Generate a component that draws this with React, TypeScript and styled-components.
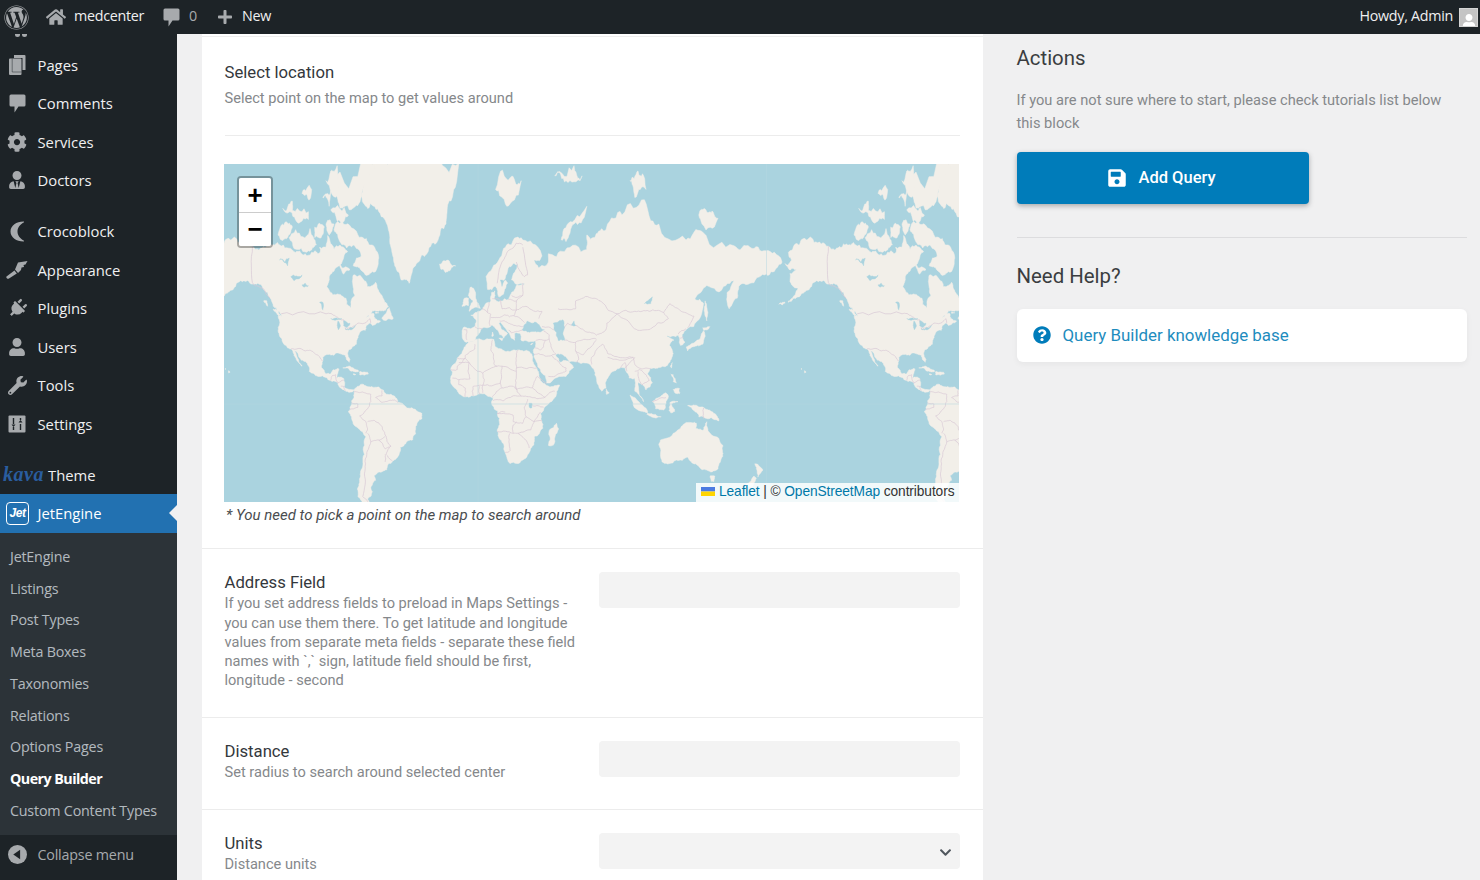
import React from "react";
import styled, { createGlobalStyle } from "styled-components";
import {
  FaWordpress,
  FaHome,
  FaPlus,
  FaCog,
  FaUserTie,
  FaPlug,
  FaUser,
  FaWrench,
  FaSave,
  FaQuestionCircle,
  FaChevronDown,
} from "react-icons/fa";

type Pt = [number, number];

// lon/lat outlines, projected onto the same web mercator the tiles use
const WORLD = 576;
const LON0_X = 254;
const EQUATOR_Y = 240;
const px = (lon: number) => LON0_X + (lon / 360) * WORLD;
const py = (lat: number) =>
  EQUATOR_Y - (WORLD / (2 * Math.PI)) * Math.log(Math.tan(Math.PI / 4 + (lat * Math.PI) / 360));

// coarse outlines look like polygons, so break the long edges up a bit
let seed = 7;
const rnd = () => {
  seed = (seed * 16807) % 2147483647;
  return seed / 2147483647 - 0.5;
};
const roughen = (pts: Pt[], close: boolean, amount: number, levels = 3): Pt[] => {
  let out = pts;
  for (let l = 0; l < levels; l++) {
    const next: Pt[] = [];
    const n = close ? out.length : out.length - 1;
    for (let i = 0; i < n; i++) {
      const a = out[i];
      const b = out[(i + 1) % out.length];
      const dx = b[0] - a[0];
      const dy = b[1] - a[1];
      next.push(a);
      if (Math.hypot(dx, dy) > 0.7) {
        const k = rnd() * amount;
        next.push([(a[0] + b[0]) / 2 - dy * k, (a[1] + b[1]) / 2 + dx * k]);
      }
    }
    if (!close) next.push(out[out.length - 1]);
    out = next;
  }
  return out;
};
const toPath = (pts: Pt[], close = true, amount = 0.32) =>
  roughen(pts, close, amount)
    .map((p, i) => `${i ? "L" : "M"}${px(p[0]).toFixed(1)} ${py(p[1]).toFixed(1)}`)
    .join("") + (close ? "Z" : "");

const land: Pt[][] = [
  // north america
  [[-168,65.6],[-164,66.5],[-166,68.3],[-161,70.3],[-156.5,71.3],[-150,70.5],[-141,69.7],[-135,69.3],[-128,70],[-124,70],[-115,68.5],[-108,68],[-100,68],[-95,69.5],[-94,71.9],[-90,69],[-85,69.5],[-81.5,68.5],[-85,66],[-87,65],[-93,62],[-94.5,59],[-92.5,57],[-88,56.5],[-82.5,55],[-82,52.5],[-79.5,51.3],[-79,54.5],[-77,56],[-78,58.7],[-78,62.4],[-73,62],[-70,60.5],[-69,58.8],[-65.5,59.5],[-64,60.3],[-61,56.5],[-57,53],[-56,51.8],[-60,50.2],[-66,50.2],[-70,47.5],[-65,49],[-64.5,47],[-61,46],[-64,44.5],[-66,44],[-67,45],[-70,43.5],[-70.5,41.7],[-74,40.6],[-75.5,37.5],[-76,35],[-78,33.9],[-81,32],[-81.5,30],[-80,26.8],[-80.5,25.2],[-82,26.5],[-83,29],[-85,29.7],[-89,30.2],[-90,29.1],[-94,29.6],[-97,28],[-97.5,25],[-97.8,22.3],[-95.5,18.8],[-92,18.6],[-90.7,20.8],[-87,21.5],[-88,18],[-88.5,16],[-84,15.8],[-83.3,13],[-83.7,10.5],[-80,9],[-77.5,8.7],[-78.5,7.5],[-80.5,7.3],[-83,8.3],[-85.7,10],[-87.5,13],[-91,14],[-94.5,16.2],[-100,17],[-105.5,20],[-105.5,22.5],[-109,26],[-112.5,30],[-114.7,31.7],[-113,28],[-110,23],[-112,25],[-115,29],[-117,32.5],[-120.5,34.5],[-122.5,37.5],[-124.3,40.3],[-124,46],[-124.7,48.4],[-122.5,48],[-125,50],[-128,52],[-130,55],[-134,58],[-139,59.8],[-146,60.7],[-151,60],[-153,58],[-158,56.5],[-164,54.8],[-160,58.5],[-165,60.5],[-165,63],[-161,64]],
  // greenland
  [[-73,78.3],[-66,81],[-55,82.3],[-40,83.4],[-28,83.2],[-12,81.7],[-19,77],[-20,74],[-25,71],[-32,68],[-38,65.8],[-42,62],[-43,60],[-48,61],[-52,65],[-54,69],[-56,73],[-62,76],[-69,76.5]],
  // canadian arctic
  [[-125,72],[-120,74.4],[-116,73.5],[-119,71.5]],
  [[-118,71.5],[-114,73],[-105,73.2],[-101,70],[-106,68.7],[-115,69.2]],
  [[-117,76],[-106,76],[-106,74.8],[-114,74.7]],
  [[-102,73.5],[-96,73.5],[-98,71.5],[-102,71.5]],
  [[-95,74],[-90,74],[-93,72]],
  [[-92,76.3],[-81,75.5],[-88,74.5]],
  [[-88,78],[-92,81],[-70,83],[-62,82.3],[-72,79],[-76,77],[-85,76.5]],
  [[-95,80],[-88,81.5],[-87,79]],
  [[-122,76.5],[-116,77.5],[-116,76]],
  [[-110,78.5],[-104,79],[-105,77.8]],
  [[-97,78],[-92,78.8],[-93,76.8]],
  [[-90,73],[-80,73.7],[-72,71.5],[-68,70],[-62,67],[-64,63.5],[-68,62.6],[-74,64.5],[-78,65],[-73,67.5],[-78,70],[-86,70.5]],
  [[-87,65.5],[-80,64],[-84,62.8]],
  [[-99,69.5],[-96,69],[-98,68.5]],
  [[-60,47],[-55,46.8],[-53,47],[-55.5,51.5],[-59,48]],
  [[-128,50.8],[-125,50],[-123.5,48.4],[-125.5,48.8]],
  [[-64,49.8],[-62,49.4],[-64,49.2]],
  [[-134,54],[-132,54],[-131.5,52]],
  // aleutians, hawaii
  [[-166,54],[-163,54.8],[-166,53.5]],
  [[-172,52.8],[-168,53.3],[-170,52.5]],
  [[-156,20.3],[-155,19.5],[-155.8,19]],
  [[-158,21.6],[-157.5,21.3],[-158,21.2]],
  // caribbean
  [[-84.5,22],[-80,23],[-75,20.8],[-74.5,20],[-78,20],[-82,22]],
  [[-74,19.8],[-69,19.5],[-68.5,18.4],[-74,18]],
  [[-78,18.5],[-76.3,18.1],[-77.5,17.8]],
  // south america
  [[-77.5,8.7],[-75,11],[-72,12.2],[-68,10.7],[-62,10.6],[-57,6],[-52,4.8],[-50,1],[-44.5,-2.5],[-39,-3.5],[-35,-6],[-35,-9],[-39,-14],[-39,-18],[-41,-22],[-45,-23.7],[-48.5,-26],[-49,-29],[-53,-33.5],[-56,-35],[-57,-38],[-62,-39],[-65,-41],[-64,-43],[-67,-46],[-66,-48],[-69,-51],[-68,-53],[-72,-53.5],[-75,-50],[-74,-44],[-73,-38],[-71,-30],[-70,-20],[-75,-15],[-79,-8],[-81,-5],[-80,-2],[-79,2],[-77.5,4],[-77.5,7]],
  // africa
  [[-6,35.8],[3,37],[10,37.3],[11,33.5],[15,32.3],[20,31],[25,32],[32,31.2],[34.2,28],[37,21],[39,15.5],[43,11.5],[51,11.8],[49,6],[42,-1.5],[39,-6],[40.5,-15],[35,-20],[35,-24.5],[32.8,-27],[28,-33],[20,-34.8],[18.2,-32],[14.5,-22],[12,-16],[13.5,-9],[9,-1],[9.5,4],[5,5.8],[-4,5.2],[-8,4.5],[-13,8.5],[-17,14.7],[-16,19],[-17,21],[-13,27.5],[-10,30]],
  // eurasia
  [[-9,37],[-9.3,43],[-2,43.5],[-1,46],[-4.5,48.4],[1,50],[4,52],[8,54],[8.5,57],[10.5,57.5],[10,54.5],[14,54],[19,54.5],[21,57],[24,59.3],[30,60],[23,60],[21,61],[25,65.5],[22,65.7],[17,61.5],[18.5,60],[16,56.5],[13,55.5],[11,59],[6,58],[5,62],[13,66.5],[20,70],[28,71],[40,67.5],[35,66.5],[38,64.5],[44,66],[44,68],[54,68.5],[68,69],[68,72],[73,71.5],[75,72.5],[80,73],[90,75.5],[104,77.7],[113,74],[130,71],[140,72.7],[160,69.8],[170,69.5],[180,68.7],[190,66],[187,64.6],[179,62.5],[170,60],[163,59],[162,55],[157,51],[155.7,57],[160,61],[155,59.3],[143,59.3],[135.5,54.7],[141,53],[138,46.5],[130.7,42.5],[127.5,39.8],[129.4,36],[126.5,34.4],[125,39.5],[121.5,39],[118,39],[122.5,37],[119.5,34.5],[122,30],[119.5,25],[113.5,22.3],[108,21.7],[106,19],[109,13],[105,8.8],[100,13.5],[103.5,1.5],[100.5,6],[98,8],[98,16],[94.5,16],[92,22],[87,21.5],[80.3,15],[80,10],[77.5,8],[73,18],[72.5,21],[67,24.8],[57,25.5],[56,27],[50,30],[48.5,29.5],[51,25],[56.3,26],[59.8,22.5],[55,17],[45,13],[43,13],[39,21],[35,28.3],[34.5,31.5],[36,36.5],[31,36.5],[27,37],[26.5,40],[23,40.5],[23,37],[20,39.5],[14,45.5],[13,45],[18.5,40.3],[16,38],[12,42],[8.5,44.2],[3,43],[0,39.5],[-2,37],[-5.5,36]],
  // islands
  [[-5.5,50],[1.5,51.2],[-1.5,55],[-2,57.5],[-5,58.6],[-6,56],[-3,54],[-5,52]],
  [[-10,52],[-6,52.2],[-6,55],[-8.5,55]],
  [[-24,65.5],[-18,66.3],[-14,65],[-19,63.4],[-23,64]],
  [[11,79],[20,80.3],[27,80],[18,76.8]],
  [[48,80.5],[60,81.5],[65,80.5],[55,80]],
  [[95,80],[100,81],[105,79],[98,78]],
  [[138,75.5],[145,76],[150,75],[140,74]],
  [[52,71],[56,74],[68,76.8],[60,74],[55,70.7]],
  [[142,54],[143.5,50],[143,46],[142,48]],
  [[141,41.5],[142,39],[140.5,35],[136,34],[131,31.5],[130,33.5],[135,35.6],[139,38]],
  [[140.5,43],[145,43.5],[143,42],[141,41.8]],
  [[120.3,23],[121.5,25],[121,22]],
  [[120.5,18.5],[122,18],[124,13],[122,14]],
  [[122,9],[126,9.5],[126,6.5],[123,7]],
  [[95,5.5],[98,4],[104,-2],[106,-6],[102,-4.5]],
  [[105.5,-6.5],[111,-6.5],[114.5,-8],[108,-7.8]],
  [[109,1.5],[114,4.5],[117,7],[119,5],[117.5,1],[116,-3.8],[111,-3]],
  [[120,1],[125,1.5],[121,0],[123,-4.5],[120.5,-5.5],[119.5,-2]],
  [[131,-1],[138,-1.8],[144,-3.8],[147.5,-6],[150.5,-10.5],[146,-8.5],[143,-9],[138,-8],[135,-4]],
  [[114,-22],[113.5,-26],[115,-34],[119,-35],[124,-33],[131,-31.5],[136,-35],[140,-38],[146,-39],[150,-37.5],[153,-31],[153,-25],[146,-19],[143,-11],[141,-16],[136,-15],[136.5,-12],[131,-11.5],[127,-14],[122,-18]],
  [[145,-41],[148,-41],[147.5,-43.5],[146,-43.5]],
  [[173,-35],[178,-38],[175,-41.5],[174.5,-39]],
  [[172.5,-41],[174,-42],[171,-46],[167,-46]],
  [[44,-25],[47,-25],[50.3,-15.5],[49,-12],[44.5,-16.5]],
  [[80,9.5],[82,7],[80.5,6]],
  [[33,35],[34.5,35.5],[33,34.6]],
  [[9,41],[9.5,39],[8.5,39]],
  [[13,38],[15.5,38],[15,36.7]],
];

const water: Pt[][] = [
  [[27.7,42],[31,46],[37,45],[41.5,42],[36,41.3],[31,41]],
  [[47,45],[53,46.5],[53,40],[54,37],[50,37],[49,41]],
  [[60,46],[61,44],[58.5,44]],
  [[-92,47],[-87,47],[-85,47],[-88,46.5]],
  [[-87.5,46],[-86,44],[-87.3,42],[-88,44]],
  [[-84,46],[-80,45],[-82,43],[-84,44]],
  [[-83,42.5],[-79,43],[-76.5,44],[-79,42]],
  [[-124,66.5],[-118,67],[-119,65]],
  [[-117,62],[-110,62.5],[-115,60.8]],
  [[-99,53.5],[-97,53.5],[-97,50.5]],
  [[-110,59.5],[-106,59.2],[-109,58.8]],
  [[32,0.5],[34,0],[33.5,-2.5],[32,-2]],
  [[104,53],[109,55.5],[108,53]],
  [[14,61],[18,61.5],[15,59]],
];

const borders: Pt[][] = [
  [[-141,69.7],[-141,60.2],[-137,59],[-130,55]],
  [[-123,49],[-95,49],[-89,48],[-84,46.5],[-82.5,42],[-79,43],[-75,45],[-71,45],[-67.5,47],[-67,45]],
  [[-117,32.5],[-108,31.5],[-106,31.7],[-101,29.5],[-97.3,26]],
  [[-92,14.6],[-91,17.5],[-89,18],[-88.8,15.8],[-87.5,13],[-83.5,15]],
  [[-85.7,11],[-83.7,11],[-83,8.3]],
  [[-77.5,7.5],[-72,7.5],[-67,6],[-67,1.5],[-70,-4],[-74,-7.5],[-70,-11],[-69,-15.5],[-70,-18]],
  [[-79,0.8],[-75,0],[-75,-2],[-80.3,-3.5]],
  [[-60,8.5],[-60,5],[-64,4],[-60,1],[-56,2],[-52,2.5],[-50,1]],
  [[-69,-11],[-65,-10],[-60,-14],[-58,-19],[-54.5,-25.5],[-57.5,-30],[-53.5,-33.5]],
  [[-69,-18],[-67,-23],[-62,-22],[-58,-20]],
  [[-62,-22],[-58,-27],[-54.5,-25.5]],
  [[-67,-23],[-69.5,-30],[-71,-40],[-72,-50],[-69,-52]],
  [[-58,-34],[-58,-30]],
  [[-9,42],[-7,42],[-7,37.2]],
  [[-2,43.5],[3,42.5]],
  [[2.5,51],[6,49.5],[8,48.8],[7,45],[7.5,43.8]],
  [[7,53.5],[6,50.8],[6,49.5]],
  [[9,54.8],[14.2,54],[15,51],[24,50.5],[24,54],[19,54.5]],
  [[8,47.5],[13,47.5],[17,48.5],[22.5,48.2],[24,50.5]],
  [[13.5,46],[16.5,46],[19,45],[22.5,44],[28.5,43.7]],
  [[22.5,48.2],[29,45.3]],
  [[19,42],[21,40.5],[26,41.5],[28,42]],
  [[24,54],[28,56],[28,60]],
  [[21,56],[28,56]],
  [[24,50.5],[30,52],[40,50],[38,47]],
  [[12,60],[15,66],[20,69],[28,70]],
  [[24,66],[29,62],[31,62.5],[28,69.5]],
  [[40,43.5],[48,42]],
  [[36,36.7],[42,37],[44.5,37.5],[44.5,39.5],[41,41.5]],
  [[35.5,33],[39,32],[41,34],[42,37]],
  [[35,29.5],[38,30],[46,29],[48.5,29.8]],
  [[46,29],[51,24.5],[55,22],[55,20],[52,19],[44,17]],
  [[44.5,37.5],[46,33],[48.5,30]],
  [[61,36],[61,31.5],[63,27],[61.7,25]],
  [[54,37],[61,36],[66,37.4],[74,37.5]],
  [[61,31.5],[66,29.5],[70,33],[74,37]],
  [[71,24],[71,28],[74,32],[78,35]],
  [[50,51],[61,51],[61,54],[71,55],[77,53.8],[87,49]],
  [[53,42],[56,45],[61,44],[68,41],[74,39.5],[80,42],[80.5,45],[87,49]],
  [[87,49],[98,50],[107,50],[116,49.5],[120,53],[127,50],[135,48],[131,43]],
  [[87,49],[97,43],[105,42],[112,45],[119,47],[116,49.5]],
  [[78,35],[81,30],[88,28],[97,28],[98,24],[102,21.5],[108,21.7]],
  [[81,28],[88,26.5],[92,26.5],[97,28]],
  [[89,22],[92,25],[93,20]],
  [[92,22],[94,24],[98,28]],
  [[98,20],[101,21],[105,18],[107,14.5],[102.5,12],[100,20]],
  [[125,40],[130,42.5]],
  [[126,38],[128.5,38.5]],
  [[141,-2.5],[141,-9]],
  [[109,1.5],[115,4],[117.5,4]],
  [[-13,27.5],[-8,27.5],[-8,29],[-2,32.5],[-2,35]],
  [[-17,21],[-13,21],[-13,23],[-8,27.5],[3,19],[12,23],[15,23],[24,20],[24,30],[25,32]],
  [[9,37],[8,32],[9.5,30],[10,24],[12,23]],
  [[24,22],[37,22]],
  [[-16,16],[-12,15],[-5,15.5],[-5.5,25],[-12,25]],
  [[-12,15],[-12,12],[-8,10],[-8,4.5]],
  [[-3,5],[-3,11],[3,11.7],[4,15],[3,19]],
  [[1,6],[1,11]],
  [[3,7],[3,11.7],[14,13],[15,23]],
  [[9,4.5],[15,10],[14,13]],
  [[15,10],[22,11],[24,9],[24,20]],
  [[23,11],[27,5],[34,4],[41,3.8],[48,8]],
  [[24,9],[34,10],[35,13],[37,17],[43,12.5]],
  [[34,10],[42,4]],
  [[9.5,2.2],[16,2],[18,3.5],[27,5]],
  [[17,-5],[14,-5],[12,-6],[22,-7],[22,-11],[28,-12],[30,-8],[29,-2],[31,3]],
  [[12,-17],[22,-18],[25,-18],[33,-16],[35,-11],[40,-10.5]],
  [[34,-1],[41,-2]],
  [[30,-8],[35,-11],[39,-5]],
  [[20,-18],[20,-28],[17,-29]],
  [[25,-18],[30,-22],[32,-26.5]],
  [[22,-18],[22,-13],[24,-11]],
];

const landPaths = land.map((pts) => toPath(pts));
const waterPaths = water.map((pts) => toPath(pts));
const borderPaths = borders.map((pts) => toPath(pts, false, 0.22));

const GlobalStyle = createGlobalStyle`
  html, body {
    margin: 0;
    padding: 0;
    height: 100%;
    overflow: hidden;
    background: #f0f0f1;
  }
  * {
    box-sizing: border-box;
  }
`;

const Page = styled.div`
  width: 1480px;
  height: 880px;
  display: grid;
  grid-template-rows: 34px 1fr;
  grid-template-columns: 177px 1fr;
  overflow: hidden;
`;

const TopBar = styled.header`
  grid-column: 1 / 3;
  background: #1d2327;
  display: flex;
  align-items: center;
  justify-content: space-between;
  color: #f0f0f1;
  font: 14.3px/20px "Open Sans", "Noto Sans", sans-serif;
  letter-spacing: -0.28px;
`;

const BarGroup = styled.div`
  display: flex;
  align-items: center;
  height: 100%;
`;

const BarItem = styled.div<{ $gap?: number; $left?: number }>`
  display: flex;
  align-items: center;
  gap: ${(p) => p.$gap ?? 8}px;
  margin-left: ${(p) => p.$left ?? 0}px;
  color: #f0f0f1;
  span {
    margin-top: -2px;
  }
  svg {
    color: #a7aaad;
    display: block;
  }
`;

const MutedCount = styled.span`
  color: #a7aaad;
`;

const Greeting = styled.span`
  margin-top: -2px;
`;

const Avatar = styled.div`
  width: 19px;
  height: 19px;
  margin: 0 2px 0 6px;
  background: #c4c4c4;
  border: 1px solid #d4d4d4;
  display: flex;
  align-items: flex-end;
  justify-content: center;
  overflow: hidden;
  svg {
    color: #fff;
    margin-bottom: -2px;
  }
`;

const Sidebar = styled.nav`
  background: #1d2327;
  display: flex;
  flex-direction: column;
  overflow: hidden;
  font: 14.8px "Open Sans", "Noto Sans", sans-serif;
`;

const MenuGroup = styled.ul<{ $top?: number }>`
  list-style: none;
  margin: ${(p) => p.$top ?? 0}px 0 0;
  padding: 0;
`;

const CutOffIcon = styled.div`
  height: 0;
  margin-left: 15px;
  display: flex;
  gap: 2px;
  &::before,
  &::after {
    content: "";
    width: 5px;
    height: 3px;
    background: #a7aaad;
    border-radius: 0 0 3px 3px;
  }
`;

const MenuItem = styled.li`
  height: 38.5px;
  display: flex;
  align-items: center;
  color: #f0f0f1;
`;

const IconSlot = styled.span`
  width: 37.5px;
  flex: none;
  display: flex;
  justify-content: center;
  padding-right: 3px;
  color: #a7aaad;
  svg {
    display: block;
  }
`;

const ThemeItem = styled(MenuItem)`
  margin-top: 12.5px;
  padding-left: 3px;
  gap: 7px;
`;

const KavaLogo = styled.span`
  font: italic bold 20px "Liberation Serif", serif;
  color: #2a5d9f;
  width: 38px;
  letter-spacing: 0.5px;
`;

const ActiveItem = styled(MenuItem)`
  background: #2271b1;
  color: #fff;
  position: relative;
  &::after {
    content: "";
    position: absolute;
    right: 0;
    top: 50%;
    margin-top: -8px;
    border: 8px solid transparent;
    border-right-color: #f0f0f1;
    border-left-width: 0;
    width: 0;
    height: 0;
  }
`;

const JetBadge = styled.span`
  width: 23px;
  height: 23px;
  margin-left: 6px;
  margin-right: 8.5px;
  border: 1px solid #fff;
  border-radius: 4px;
  color: #fff;
  font: italic bold 12px "Liberation Sans", sans-serif;
  display: flex;
  align-items: center;
  justify-content: center;
  letter-spacing: -0.5px;
`;

const SubMenu = styled.ul`
  list-style: none;
  margin: 0;
  padding: 8px 0 8px;
  height: 302px;
  background: #2c3338;
`;

const SubItem = styled.li<{ $current?: boolean }>`
  height: 31.75px;
  display: flex;
  align-items: center;
  padding-left: 10px;
  color: ${(p) => (p.$current ? "#fff" : "rgba(240,246,252,0.7)")};
  font-weight: ${(p) => (p.$current ? 700 : 400)};
  font-size: 14.3px;
  letter-spacing: ${(p) => (p.$current ? "-0.55px" : "-0.2px")};
`;

const CollapseRow = styled.div`
  height: 39px;
  display: flex;
  align-items: center;
  color: #a7aaad;
  font-size: 14.3px;
  letter-spacing: -0.2px;
`;

const Content = styled.main`
  display: grid;
  grid-template-columns: 781px 484px;
  gap: 0;
  padding-left: 25px;
  min-height: 0;
  font-family: Roboto, "Liberation Sans", sans-serif;
  overflow: hidden;
`;

const Card = styled.section`
  background: #fff;
  height: 100%;
  color: #23282d;
  &::before {
    content: "";
    display: block;
    box-sizing: border-box;
    height: 3px;
    border-bottom: 1px solid #eeeeee;
  }
`;

const LocationHead = styled.div`
  margin: 0 23px 0 22.5px;
  padding: 25px 0 27px;
  border-bottom: 1px solid #ececec;
`;

const FieldTitle = styled.div`
  font-size: 16.7px;
  line-height: 22px;
  color: #34383c;
`;

const FieldHint = styled.div`
  font-size: 14.6px;
  line-height: 19.3px;
  color: #85888b;
`;

const LocationHint = styled(FieldHint)`
  margin-top: 5px;
`;

const MapBlock = styled.div`
  margin: 28px 23px 0 22px;
`;

const MapFrame = styled.div`
  position: relative;
  width: 735px;
  height: 338px;
  background: #aad3df;
  overflow: hidden;
  svg {
    display: block;
  }
`;

const Zoom = styled.div`
  position: absolute;
  left: 13px;
  top: 12px;
  width: 36px;
  border: 2px solid rgba(0, 0, 0, 0.3);
  border-radius: 4px;
  overflow: hidden;
  background-clip: padding-box;
`;

const ZoomBtn = styled.div`
  height: 34px;
  background: #fff;
  color: #000;
  display: flex;
  align-items: center;
  justify-content: center;
  font: bold 26px "Liberation Sans", sans-serif;
  & + & {
    border-top: 1px solid #ccc;
  }
`;

const Attribution = styled.div`
  position: absolute;
  right: 0;
  bottom: 0;
  height: 19px;
  width: 263px;
  padding: 0 0 3px 5px;
  display: flex;
  align-items: center;
  background: rgba(255, 255, 255, 0.85);
  color: #333;
  font: 13.75px "Liberation Sans", sans-serif;
  letter-spacing: -0.1px;
  white-space: pre;
  a {
    color: #0078a8;
  }
  svg {
    margin-right: 4px;
  }
`;

const MapNote = styled.div`
  font-size: 15px;
  font-style: italic;
  line-height: 19px;
  color: #4a4d50;
  margin: 4px 0 0 2px;
  padding-bottom: 23px;
`;

const FieldRow = styled.div<{ $height: number }>`
  height: ${(p) => p.$height}px;
  border-top: 1px solid #ececec;
  padding: 23px 23px 0 22.5px;
  display: grid;
  grid-template-columns: 354.5px 361px;
  gap: 20px;
  align-items: start;
`;

const FieldInfo = styled.div`
  margin-top: 0;
`;

const FieldControl = styled.div`
  height: 36px;
  background: #f3f3f3;
  border-radius: 4px;
  display: flex;
  align-items: center;
  justify-content: flex-end;
  padding: 2px 8px 0 0;
  color: #50575e;
`;

const Side = styled.aside`
  padding: 10px 0 0 33.5px;
  color: #23282d;
`;

const SideTitle = styled.h3`
  margin: 0;
  font-size: 20.4px;
  font-weight: 400;
  line-height: 28px;
  color: #3a3d40;
`;

const SideText = styled.p`
  margin: 17px 0 0;
  font-size: 14.65px;
  line-height: 23.4px;
  color: #85888b;
`;

const AddButton = styled.button`
  margin-top: 16px;
  width: 292px;
  height: 52px;
  background: #007cba;
  color: #fff;
  border: 0;
  border-radius: 4px;
  box-shadow: 0 2px 5px rgba(35, 40, 45, 0.35);
  display: flex;
  align-items: center;
  justify-content: center;
  gap: 11px;
  font: 500 16.5px Roboto, sans-serif;
  padding: 0 2px 0 0;
`;

const SideDivider = styled.div`
  border-top: 1px solid #dcdcde;
  margin: 33px 0 24px;
`;

const HelpCard = styled.div`
  margin-top: 19px;
  height: 53px;
  background: #fff;
  border-radius: 6px;
  box-shadow: 0 2px 6px rgba(35, 40, 45, 0.05);
  display: flex;
  align-items: center;
  gap: 12px;
  padding-left: 16px;
  color: #007cba;
  font-size: 16.9px;
  svg {
    display: block;
  }
`;

const HelpLink = styled.span`
  color: #1e8cbe;
`;

const PagesIcon = () => (
  <svg width="18" height="20" viewBox="0 0 18 20" fill="currentColor">
    <path d="M6 0h10.5a1 1 0 0 1 1 1v14h-3V3H6z" />
    <path d="M2 3.5h10.5a1 1 0 0 1 1 1V19a1 1 0 0 1-1 1H2a1 1 0 0 1-1-1V4.500a1 1 0 0 1 1-1z" />
    <path d="M4.2 3.5V17h9.3" fill="none" stroke="#1d2327" strokeWidth="0.8" opacity="0.6" />
  </svg>
);

const BubbleIcon = () => (
  <svg width="17" height="19" viewBox="0 0 17 19" fill="currentColor">
    <path d="M2 .5h13A1.5 1.5 0 0 1 16.5 2v9a1.5 1.5 0 0 1-1.5 1.5h-5.5l-4 6v-6H2A1.5 1.5 0 0 1 .5 11V2A1.5 1.5 0 0 1 2 .5z" />
  </svg>
);

const CrocoIcon = () => (
  <svg width="18" height="21" viewBox="0 0 18 21" fill="currentColor">
    <path d="M15.5.5C8.5.5 2.5 4.5 2.5 10.5s6 10 13 10c.6 0 .7-.7.2-1C12 17.5 9.5 14.5 9.5 10.5s2.500-7 6.200-9c.5-.3.4-1-.2-1z" />
  </svg>
);

const BrushIcon = () => (
  <svg width="22" height="19" viewBox="0 0 22 19" fill="currentColor">
    <path d="M.5 16.5L8.5 10.5l2.3 3L3 18.5c-1.5.8-3.3-.8-2.5-2z" />
    <path d="M9 9.5L12 2.5 21.5 1 19.5 4.5 17.5 5 18 7 15.5 7.5 15 10 12 13z" />
  </svg>
);

const SlidersIcon = () => (
  <svg width="18" height="18" viewBox="0 0 18 18">
    <rect x="0.5" y="0.5" width="17" height="17" rx="1" fill="currentColor" />
    <path d="M5.5 3v6M5.5 12v3M12.5 3v2M12.5 9v6" stroke="#1d2327" strokeWidth="1.4" />
    <path d="M3.5 9.5h4L5.5 12zM10.5 7.5h4L12.5 5z" fill="#1d2327" />
  </svg>
);

const CollapseIcon = () => (
  <svg width="19" height="19" viewBox="0 0 18 18">
    <circle cx="9" cy="9" r="9" fill="currentColor" />
    <path d="M11.5 4.5v9L5 9z" fill="#1d2327" />
  </svg>
);

const WorldMap = () => {
  const copy = (
    <g>
      {landPaths.map((d, i) => (
        <path key={i} d={d} fill="#f2efe9" stroke="#f2efe9" strokeWidth="0.5" strokeLinejoin="round" />
      ))}
      {borderPaths.map((d, i) => (
        <path key={i} d={d} fill="none" stroke="#d8c9d6" strokeWidth="0.7" strokeLinejoin="round" />
      ))}
      {waterPaths.map((d, i) => (
        <path key={i} d={d} fill="#aad3df" stroke="#aad3df" strokeWidth="0.4" strokeLinejoin="round" />
      ))}
    </g>
  );
  return (
    <svg width="735" height="338" viewBox="0 0 735 338">
      <rect width="735" height="338" fill="#aad3df" />
      <g transform="translate(-576 0)">{copy}</g>
      {copy}
      <g transform="translate(576 0)">{copy}</g>
      <path d="M254 0V338M542.5 0V338M0 240H735" stroke="#b6d8e2" strokeWidth="0.7" opacity="0.7" />
    </svg>
  );
};

const mainMenu = [
  { label: "Pages", icon: <PagesIcon /> },
  { label: "Comments", icon: <BubbleIcon /> },
  { label: "Services", icon: <FaCog size={20} /> },
  { label: "Doctors", icon: <FaUserTie size={18} /> },
];

const toolsMenu = [
  { label: "Crocoblock", icon: <CrocoIcon /> },
  { label: "Appearance", icon: <BrushIcon /> },
  { label: "Plugins", icon: <FaPlug size={19} style={{ transform: "rotate(45deg)" }} /> },
  { label: "Users", icon: <FaUser size={18} /> },
  { label: "Tools", icon: <FaWrench size={19} /> },
  { label: "Settings", icon: <SlidersIcon /> },
];

const subMenu = [
  "JetEngine",
  "Listings",
  "Post Types",
  "Meta Boxes",
  "Taxonomies",
  "Relations",
  "Options Pages",
  "Query Builder",
  "Custom Content Types",
];

const App = () => {
  return (
    <Page>
      <GlobalStyle />
      <TopBar>
        <BarGroup>
          <BarItem $left={4}>
            <FaWordpress size={25} />
          </BarItem>
          <BarItem $left={17}>
            <FaHome size={20} />
            <span>medcenter</span>
          </BarItem>
          <BarItem $left={19} $gap={9}>
            <BubbleIcon />
            <MutedCount>0</MutedCount>
          </BarItem>
          <BarItem $left={20} $gap={9}>
            <FaPlus size={16} />
            <span>New</span>
          </BarItem>
        </BarGroup>
        <BarGroup>
          <Greeting>Howdy, Admin</Greeting>
          <Avatar>
            <FaUser size={14} />
          </Avatar>
        </BarGroup>
      </TopBar>

      <Sidebar>
        <CutOffIcon />
        <MenuGroup $top={11.5}>
          {mainMenu.map((m) => (
            <MenuItem key={m.label}>
              <IconSlot>{m.icon}</IconSlot>
              {m.label}
            </MenuItem>
          ))}
        </MenuGroup>
        <MenuGroup $top={12.5}>
          {toolsMenu.map((m) => (
            <MenuItem key={m.label}>
              <IconSlot>{m.icon}</IconSlot>
              {m.label}
            </MenuItem>
          ))}
        </MenuGroup>
        <MenuGroup>
          <ThemeItem>
            <KavaLogo>kava</KavaLogo>
            Theme
          </ThemeItem>
          <ActiveItem>
            <JetBadge>Jet</JetBadge>
            JetEngine
          </ActiveItem>
        </MenuGroup>
        <SubMenu>
          {subMenu.map((s) => (
            <SubItem key={s} $current={s === "Query Builder"}>
              {s}
            </SubItem>
          ))}
        </SubMenu>
        <CollapseRow>
          <IconSlot>
            <CollapseIcon />
          </IconSlot>
          Collapse menu
        </CollapseRow>
      </Sidebar>

      <Content>
        <Card>
          <LocationHead>
            <FieldTitle>Select location</FieldTitle>
            <LocationHint>Select point on the map to get values around</LocationHint>
          </LocationHead>
          <MapBlock>
            <MapFrame>
              <WorldMap />
              <Zoom>
                <ZoomBtn>+</ZoomBtn>
                <ZoomBtn>−</ZoomBtn>
              </Zoom>
              <Attribution>
                <svg width="14" height="9" viewBox="0 0 14 9">
                  <rect width="14" height="4.5" fill="#4C7BE1" />
                  <rect y="4.5" width="14" height="4.5" fill="#FFD500" />
                </svg>
                <a>Leaflet</a>
                <span> | © </span>
                <a>OpenStreetMap</a>
                <span> contributors</span>
              </Attribution>
            </MapFrame>
            <MapNote>* You need to pick a point on the map to search around</MapNote>
          </MapBlock>
          <FieldRow $height={169}>
            <FieldInfo>
              <FieldTitle>Address Field</FieldTitle>
              <FieldHint>
                If you set address fields to preload in Maps Settings - you can use them there. To get latitude and
                longitude values from separate meta fields - separate these field names with `,` sign, latitude field
                should be first, longitude - second
              </FieldHint>
            </FieldInfo>
            <FieldControl />
          </FieldRow>
          <FieldRow $height={92}>
            <FieldInfo>
              <FieldTitle>Distance</FieldTitle>
              <FieldHint>Set radius to search around selected center</FieldHint>
            </FieldInfo>
            <FieldControl />
          </FieldRow>
          <FieldRow $height={70}>
            <FieldInfo>
              <FieldTitle>Units</FieldTitle>
              <FieldHint>Distance units</FieldHint>
            </FieldInfo>
            <FieldControl>
              <FaChevronDown size={13} />
            </FieldControl>
          </FieldRow>
        </Card>
        <Side>
          <SideTitle>Actions</SideTitle>
          <SideText>If you are not sure where to start, please check tutorials list below this block</SideText>
          <AddButton>
            <FaSave size={20} />
            Add Query
          </AddButton>
          <SideDivider />
          <SideTitle>Need Help?</SideTitle>
          <HelpCard>
            <FaQuestionCircle size={18} />
            <HelpLink>Query Builder knowledge base</HelpLink>
          </HelpCard>
        </Side>
      </Content>
    </Page>
  );
};

export default App;
